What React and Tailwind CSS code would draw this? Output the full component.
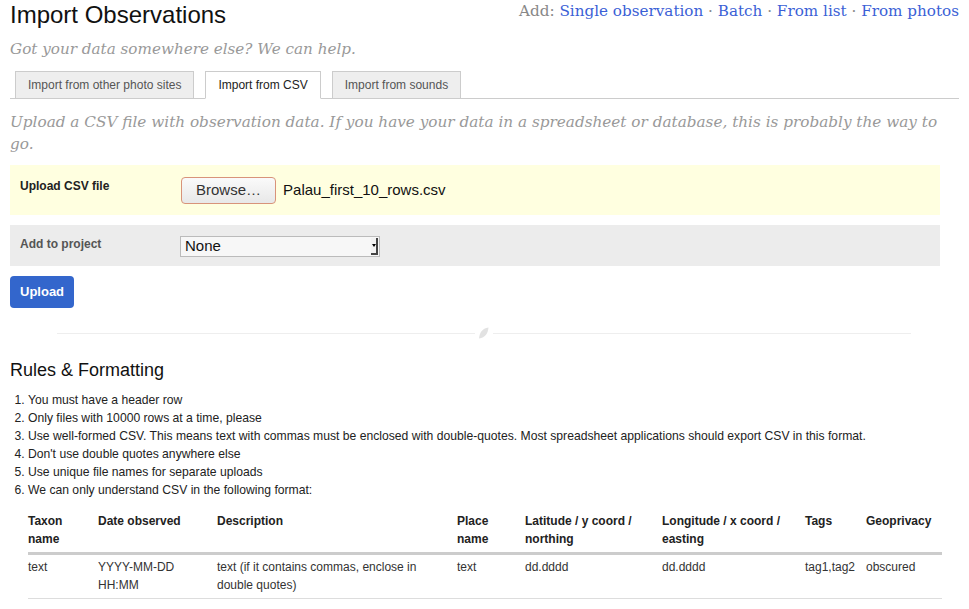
import React from 'react';

const serif = { fontFamily: '"DejaVu Serif", serif' };

const columns = [
  { head: 'Taxon name', val: 'text', w: 'w-[70px]' },
  { head: 'Date observed', val: 'YYYY-MM-DD HH:MM', w: 'w-[119px]' },
  { head: 'Description', val: 'text (if it contains commas, enclose in double quotes)', w: 'w-[240px]' },
  { head: 'Place name', val: 'text', w: 'w-[68px]' },
  { head: 'Latitude / y coord / northing', val: 'dd.dddd', w: 'w-[137px]' },
  { head: 'Longitude / x coord / easting', val: 'dd.dddd', w: 'w-[143px]' },
  { head: 'Tags', val: 'tag1,tag2', w: 'w-[61px]' },
  { head: 'Geoprivacy', val: 'obscured', w: 'w-[76px]' },
];

const rules = [
  'You must have a header row',
  'Only files with 10000 rows at a time, please',
  'Use well-formed CSV. This means text with commas must be enclosed with double-quotes. Most spreadsheet applications should export CSV in this format.',
  "Don't use double quotes anywhere else",
  'Use unique file names for separate uploads',
  'We can only understand CSV in the following format:',
];

const Tab = ({ label, active }) => (
  <div
    className={`h-[28px] px-[12px] flex items-center text-[12px] border border-[#ccc] -mb-px ${
      active ? 'bg-white text-[#222] border-b-white' : 'bg-[#eee] text-[#555]'
    }`}
  >
    {label}
  </div>
);

export default function App() {
  return (
    <div className="w-[969px] min-h-[609px] bg-white text-[#222] px-[10px]" style={{ fontFamily: '"Liberation Sans", Arial, sans-serif' }}>
      {/* Header */}
      <div className="flex justify-between items-start">
        <h1 className="text-[24px] leading-[30px] text-[#111]">Import Observations</h1>
        <div className="text-[15.2px] leading-[22px]" style={serif}>
          <span className="text-[#888]">Add: </span>
          <a className="text-[#3b5fd6]">Single observation</a>
          <span className="text-[#888]"> · </span>
          <a className="text-[#3b5fd6]">Batch</a>
          <span className="text-[#888]"> · </span>
          <a className="text-[#3b5fd6]">From list</a>
          <span className="text-[#888]"> · </span>
          <a className="text-[#3b5fd6]">From photos</a>
        </div>
      </div>
      <p className="italic text-[15.2px] leading-[22px] text-[#999] mt-[8px]" style={serif}>
        Got your data somewhere else? We can help.
      </p>

      {/* Tabs */}
      <div className="flex gap-[11px] pl-[5px] mt-[11px] border-b border-[#ccc]">
        <Tab label="Import from other photo sites" />
        <Tab label="Import from CSV" active />
        <Tab label="Import from sounds" />
      </div>

      <p className="italic text-[15.25px] leading-[22px] text-[#999] mt-[12px] pr-[10px]" style={serif}>
        Upload a CSV file with observation data. If you have your data in a spreadsheet or database, this is probably the way to go.
      </p>

      {/* Form */}
      <div className="w-[930px] mt-[10px]">
        <div className="flex bg-[#ffffe0] h-[50px] px-[10px] pt-[12px]">
          <div className="w-[161px] text-[12px] font-bold leading-[16px] pt-[1px]">Upload CSV file</div>
          <div className="flex items-center h-[27px]">
            <button className="h-[27px] px-[14px] text-[15px] text-[#333] rounded-[4px] border border-[#d8937a] bg-gradient-to-b from-[#fafafa] to-[#e8e8e8]">
              Browse…
            </button>
            <span className="ml-[7px] text-[15px] text-[#111]">Palau_first_10_rows.csv</span>
          </div>
        </div>
        <div className="flex bg-[#ececec] h-[41px] px-[10px] mt-[10px] pt-[11px]">
          <div className="w-[160px] text-[12px] font-bold leading-[16px] text-[#555]">Add to project</div>
          <div className="relative w-[200px] h-[21px] border border-[#bbb] bg-[#f7f7f7] flex items-center">
            <span className="pl-[4px] text-[15px] text-[#111]">None</span>
            <div className="absolute right-[1px] top-[1px] bottom-[1px] w-[7px] bg-[#f2f2f2] border-r-2 border-b-2 border-[#444] flex items-center justify-center">
              <div className="w-0 h-0 border-l-[2px] border-r-[2px] border-t-[3px] border-l-transparent border-r-transparent border-t-black" />
            </div>
          </div>
        </div>
        <button className="mt-[10px] h-[32px] px-[10px] rounded-[4px] bg-[#3366cc] text-white text-[13px] font-bold">
          Upload
        </button>
      </div>

      {/* Divider */}
      <div className="flex items-center ml-[47px] w-[854px] mt-[19px]">
        <div className="flex-1 h-px bg-[#eee]" />
        <svg width="12" height="12" viewBox="0 0 12 12" className="mx-[3px]">
          <path d="M1 11.5 C1.5 6 4 1.5 10.5 0.5 C10 6 7.5 10.5 1 11.5 Z" fill="#e2e2e2" />
        </svg>
        <div className="flex-1 h-px bg-[#eee]" />
      </div>

      {/* Rules */}
      <h2 className="text-[18px] leading-[24px] text-[#111] mt-[19px]">Rules &amp; Formatting</h2>
      <ol className="list-decimal pl-[18px] text-[12.17px] leading-[18px] text-[#222] mt-[9px]">
        {rules.map((r) => (
          <li key={r}>{r}</li>
        ))}
      </ol>

      <table className="ml-[18px] mt-[13px] text-[12px] leading-[18px] border-collapse w-[914px] table-fixed">
        <thead>
          <tr className="border-b-[3px] border-[#ccc]">
            {columns.map((c) => (
              <th key={c.head} className={`${c.w} text-left font-bold align-top pb-[4px] pr-[8px]`}>
                {c.head}
              </th>
            ))}
          </tr>
        </thead>
        <tbody>
          <tr className="border-b border-[#ddd]">
            {columns.map((c) => (
              <td key={c.head} className="align-top pt-[3px] pb-[4px] pr-[8px] text-[#333]">
                {c.val}
              </td>
            ))}
          </tr>
        </tbody>
      </table>
    </div>
  );
}
